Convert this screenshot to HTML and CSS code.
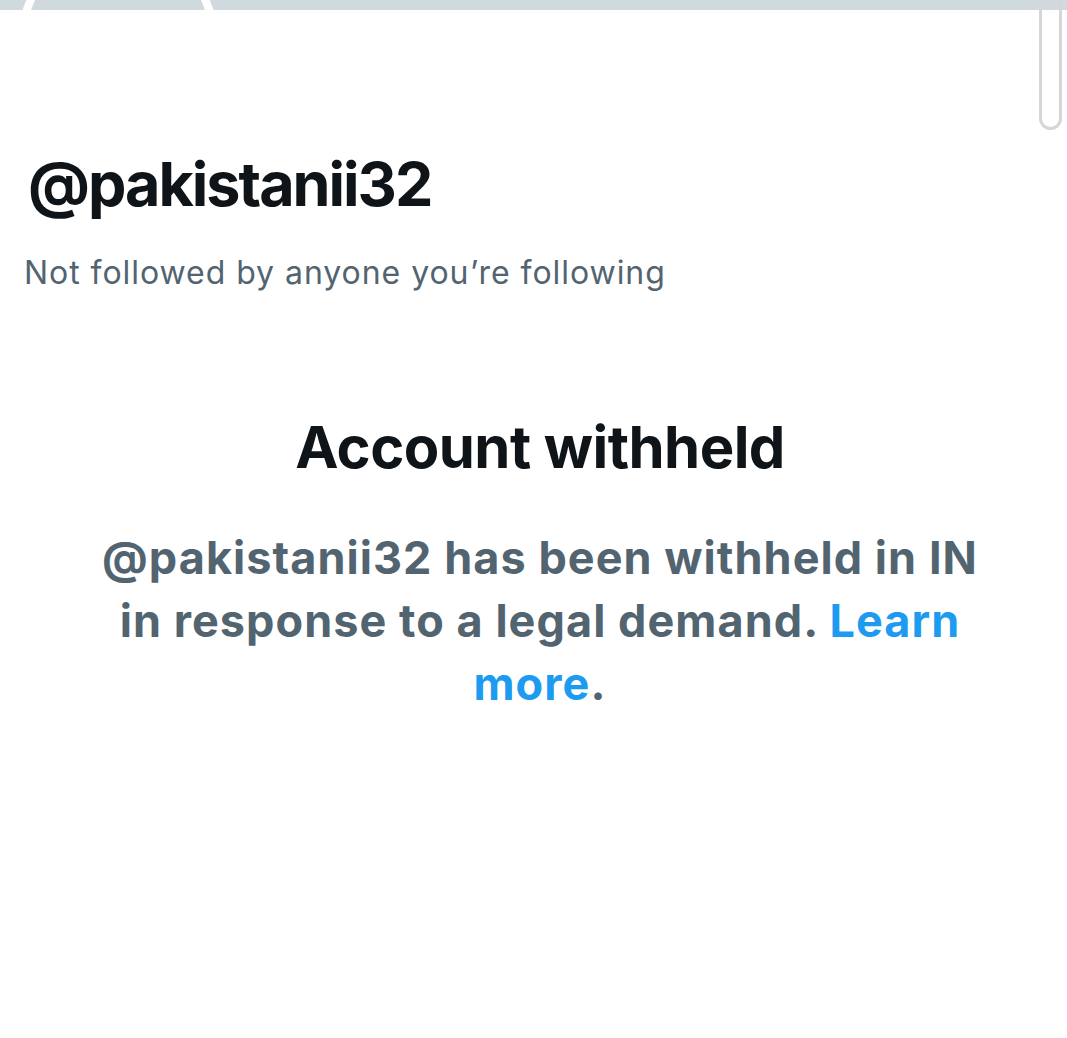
FILE: index.html
```html
<!DOCTYPE html>
<html lang="en">
<head>
<meta charset="utf-8">
<title>@pakistanii32</title>
<link rel="stylesheet" href="styles.css">
</head>
<body>
<div class="banner">
  <div class="avatar"></div>
</div>
<div class="scrollbar"></div>
<main class="profile">
  <h1 class="handle">@pakistanii32</h1>
  <p class="followers">Not followed by anyone you’re following</p>
</main>
<section class="withheld">
  <h2 class="withheld-title">Account withheld</h2>
  <p class="withheld-text">@pakistanii32 has been withheld in IN in response to a legal demand. <a class="link" href="#">Learn more</a>.</p>
</section>
</body>
</html>
```

FILE: styles.css
```css
html, body {
  margin: 0;
  padding: 0;
  background: #ffffff;
}
body {
  font-family: Inter, "Noto Sans", sans-serif;
  color: #0f1419;
  width: 1067px;
  height: 1038px;
  overflow: hidden;
  position: relative;
}
.banner {
  height: 10px;
  background: #cfd9de;
  position: relative;
  overflow: hidden;
}
.avatar {
  position: absolute;
  left: 18px;
  top: -60px;
  width: 184px;
  height: 184px;
  border: 8px solid #ffffff;
  border-radius: 50%;
  background: #cfd9de;
}
.scrollbar {
  position: absolute;
  top: -20px;
  left: 1039px;
  width: 17px;
  height: 144px;
  border: 3px solid #d6d6d6;
  border-radius: 0 0 12px 12px;
}
.profile {
  padding: 0 0 0 24px;
}
.handle {
  margin: 144px 0 0 4px;
  font-size: 61px;
  line-height: 61px;
  font-weight: 700;
  letter-spacing: -2px;
}
.followers {
  margin: 42px 0 0 0;
  font-size: 32px;
  line-height: 32px;
  font-weight: 400;
  color: #536471;
  letter-spacing: 0.95px;
}
.withheld {
  padding: 0 77px 0 90px;
  text-align: center;
}
.withheld-title {
  margin: 129px 0 0 0;
  font-size: 58px;
  line-height: 58px;
  font-weight: 700;
  color: #0f1419;
  letter-spacing: -0.55px;
}
.withheld-text {
  margin: 50px 0 0 0;
  font-size: 45px;
  line-height: 63px;
  font-weight: 700;
  color: #536471;
  letter-spacing: 1.05px;
}
.link {
  color: #1d9bf0;
  text-decoration: none;
}
```
